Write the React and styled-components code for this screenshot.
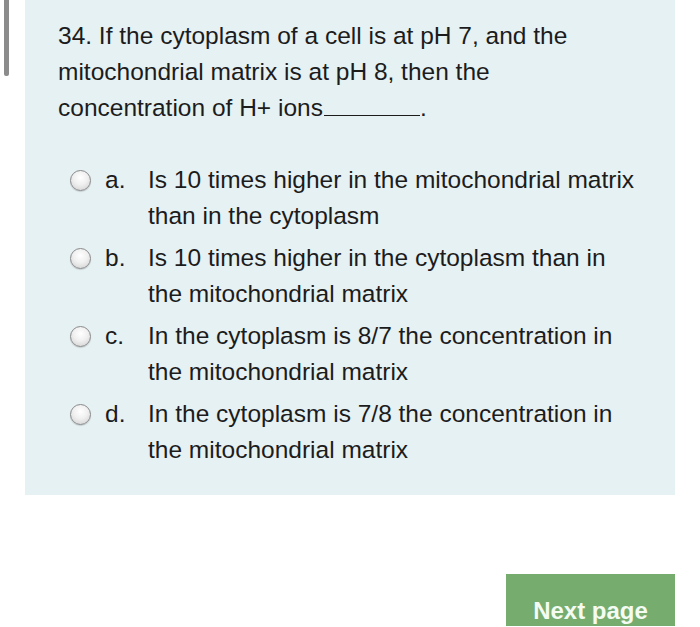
import React from "react";
import styled, { createGlobalStyle } from "styled-components";

const GlobalStyle = createGlobalStyle`
  body {
    margin: 0;
    background: #ffffff;
    font-family: "Liberation Sans", Arial, sans-serif;
  }
`;

const Page = styled.div`
  position: relative;
  width: 700px;
  height: 627px;
  overflow: hidden;
  padding-left: 25px;
  box-sizing: border-box;
`;

const ScrollThumb = styled.div`
  position: absolute;
  left: 4px;
  top: 0;
  width: 5px;
  height: 76px;
  border-radius: 0 0 2px 2px;
  background: #8c8c8c;
`;

const Panel = styled.div`
  width: 650px;
  background: #e6f1f4;
  padding: 18px 20px 27px 33px;
  box-sizing: border-box;
  color: #1c1c1c;
  font-size: 24.5px;
  line-height: 36px;
`;

const Question = styled.div`
  margin-bottom: 36px;
`;

const Blank = styled.span`
  display: inline-block;
  width: 96px;
  height: 24px;
  border-bottom: 1.5px solid #1c1c1c;
  vertical-align: baseline;
  margin-left: 1px;
`;

const OptionList = styled.div`
  display: flex;
  flex-direction: column;
  gap: 6px;
`;

const Option = styled.div`
  display: grid;
  grid-template-columns: 35px 43px 1fr;
  padding-left: 12px;
`;

const RadioCell = styled.div`
  height: 36px;
  display: flex;
  align-items: center;
`;

const Radio = styled.span`
  width: 19px;
  height: 19px;
  border-radius: 50%;
  border: 1px solid #8a8a8a;
  background: radial-gradient(circle at 50% 35%, #ffffff 0%, #f0f0f0 45%, #cdcdcd 100%);
  box-shadow: 0 1px 1px rgba(0, 0, 0, 0.15);
`;

const Letter = styled.span``;

const Answer = styled.span`
  white-space: nowrap;
`;

const Footer = styled.div`
  width: 650px;
  display: flex;
  justify-content: flex-end;
  padding-top: 79px;
`;

const NextButton = styled.button`
  width: 169px;
  height: 52px;
  border: none;
  background: #77ac6f;
  color: #f4fbf2;
  font-family: "Liberation Sans", Arial, sans-serif;
  font-size: 24px;
  font-weight: bold;
  padding: 21px 0 0;
  cursor: pointer;
`;

const options = [
  { letter: "a.", lines: ["Is 10 times higher in the mitochondrial matrix", "than in the cytoplasm"] },
  { letter: "b.", lines: ["Is 10 times higher in the cytoplasm than in", "the mitochondrial matrix"] },
  { letter: "c.", lines: ["In the cytoplasm is 8/7 the concentration in", "the mitochondrial matrix"] },
  { letter: "d.", lines: ["In the cytoplasm is 7/8 the concentration in", "the mitochondrial matrix"] },
];

const App = () => (
  <>
    <GlobalStyle />
    <Page>
      <ScrollThumb />
      <Panel>
        <Question>
          34. If the cytoplasm of a cell is at pH 7, and the
          <br />
          mitochondrial matrix is at pH 8, then the
          <br />
          concentration of H+ ions<Blank />.
        </Question>
        <OptionList>
          {options.map((o) => (
            <Option key={o.letter}>
              <RadioCell>
                <Radio />
              </RadioCell>
              <Letter>{o.letter}</Letter>
              <Answer>
                {o.lines[0]}
                <br />
                {o.lines[1]}
              </Answer>
            </Option>
          ))}
        </OptionList>
      </Panel>
      <Footer>
        <NextButton>Next page</NextButton>
      </Footer>
    </Page>
  </>
);

export default App;
